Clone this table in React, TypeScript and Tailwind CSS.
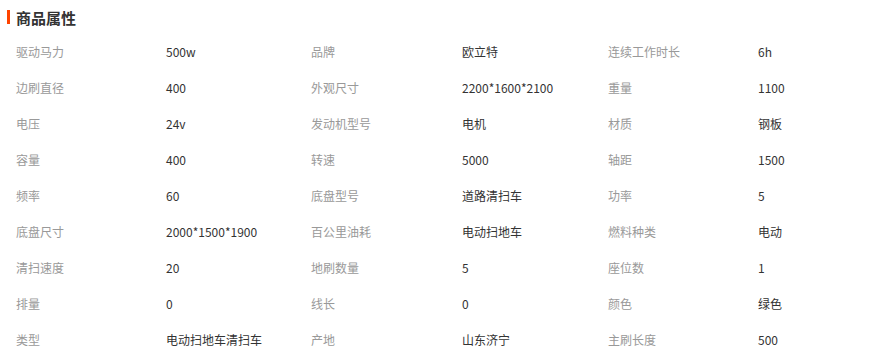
const rows: [string, string][][] = [
  [["驱动马力", "500w"], ["品牌", "欧立特"], ["连续工作时长", "6h"]],
  [["边刷直径", "400"], ["外观尺寸", "2200*1600*2100"], ["重量", "1100"]],
  [["电压", "24v"], ["发动机型号", "电机"], ["材质", "钢板"]],
  [["容量", "400"], ["转速", "5000"], ["轴距", "1500"]],
  [["频率", "60"], ["底盘型号", "道路清扫车"], ["功率", "5"]],
  [["底盘尺寸", "2000*1500*1900"], ["百公里油耗", "电动扫地车"], ["燃料种类", "电动"]],
  [["清扫速度", "20"], ["地刷数量", "5"], ["座位数", "1"]],
  [["排量", "0"], ["线长", "0"], ["颜色", "绿色"]],
  [["类型", "电动扫地车清扫车"], ["产地", "山东济宁"], ["主刷长度", "500"]],
];

export default function App() {
  return (
    <div
      className="w-[877px] h-[362px] bg-white overflow-hidden"
      style={{ fontFamily: '"Microsoft YaHei", "Noto Sans CJK SC", sans-serif' }}
    >
      {/* Title */}
      <div className="flex items-center h-[34px] pl-[7px]">
        <span className="w-[3px] h-[14px] bg-[#ff4400]" />
        <h2 className="ml-[6px] text-[15px] font-bold text-[#333] leading-none">商品属性</h2>
      </div>

      {/* Attribute table */}
      <div className="pl-[16px]">
        {rows.map((row, i) => (
          <div
            key={i}
            className="grid grid-cols-[150px_145px_151px_146px_150px_1fr] h-[36px] items-center text-[12px] leading-none"
          >
            {row.map(([label, value], j) => (
              <div key={j} className="contents">
                <span className="text-[#999]">{label}</span>
                <span className="text-[#333]">{value}</span>
              </div>
            ))}
          </div>
        ))}
      </div>
    </div>
  );
}
